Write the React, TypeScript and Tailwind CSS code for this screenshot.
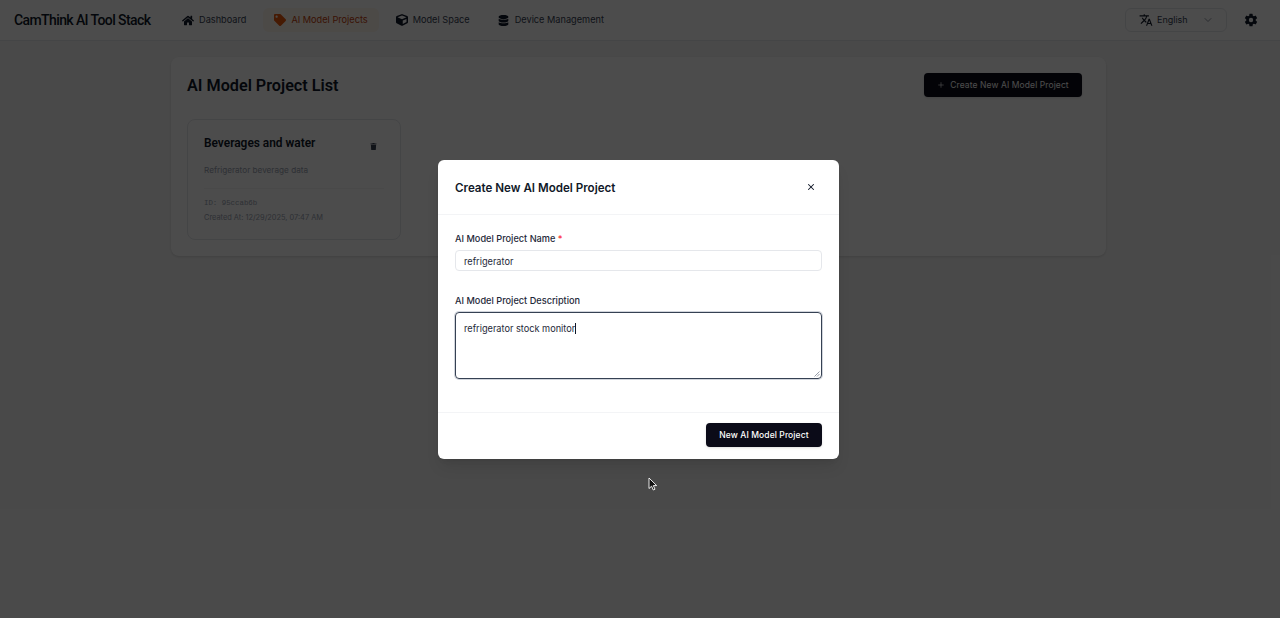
import { ChevronDown, Plus, X } from "lucide-react";
import { FaCube, FaDatabase, FaHome, FaTag, FaTrash } from "react-icons/fa";
import { IoSettingsSharp } from "react-icons/io5";
import { MdTranslate } from "react-icons/md";

const navItems = [
  { label: "Dashboard", icon: FaHome, active: false, iconSize: 13 },
  { label: "AI Model Projects", icon: FaTag, active: true, iconSize: 12 },
  { label: "Model Space", icon: FaCube, active: false, iconSize: 12 },
  { label: "Device Management", icon: FaDatabase, active: false, iconSize: 11 },
];

function Header() {
  return (
    <header className="flex h-[41px] items-center border-b border-gray-200 bg-white pl-[14px] pr-[22px]">
      <span className="w-[157px] whitespace-nowrap font-['Roboto',sans-serif] text-[14px] font-medium tracking-[-0.6px] text-gray-900">
        CamThink AI Tool Stack
      </span>
      <nav className="flex items-center gap-[6px]">
        {navItems.map((item) => {
          const Icon = item.icon;
          return (
            <div
              key={item.label}
              className={`flex h-[24px] items-center gap-[5px] rounded-md px-[11px] whitespace-nowrap text-[9.2px] ${
                item.active ? "bg-orange-50 text-[#c2410c]" : "text-gray-700"
              }`}
            >
              <span className="flex w-[12px] justify-center">
                <Icon size={item.iconSize} className={item.active ? "text-[#ea580c]" : "text-gray-900"} />
              </span>
              <span>{item.label}</span>
            </div>
          );
        })}
      </nav>
      <div className="ml-auto flex items-center gap-[17px]">
        <div className="flex h-[24px] w-[102px] items-center rounded-md border border-gray-200 pl-[13px] text-[9px] text-gray-700">
          <MdTranslate size={14} className="text-gray-900" />
          <span className="ml-[4px]">English</span>
          <ChevronDown size={12} strokeWidth={1.5} className="ml-[14px] text-gray-500" />
        </div>
        <IoSettingsSharp size={14} className="text-gray-900" />
      </div>
    </header>
  );
}

function ProjectCard() {
  return (
    <div className="h-[121px] w-[214px] rounded-lg border border-gray-200 bg-white px-[16px] pt-[15px]">
      <div className="flex items-start justify-between">
        <h3 className="font-['Roboto',sans-serif] text-[11.9px] font-semibold leading-[16px] text-gray-900">
          Beverages and water
        </h3>
        <FaTrash size={7} className="mr-[7px] mt-[8px] text-gray-700" />
      </div>
      <p className="mt-[13px] text-[8.2px] leading-[12px] text-gray-400">Refrigerator beverage data</p>
      <div className="mt-[12px] border-t border-gray-100 pt-[8px]">
        <p className="font-['Liberation_Mono',monospace] text-[7.4px] leading-[12px] text-gray-400">ID: 95ccab6b</p>
        <p className="mt-[3px] text-[7.4px] leading-[12px] text-gray-400">Created At: 12/29/2025, 07:47 AM</p>
      </div>
    </div>
  );
}

function ProjectList() {
  return (
    <main className="px-[171px] pt-[16px] pr-[174px]">
      <section className="h-[199px] rounded-lg bg-white px-[16px] pt-[16px] shadow-sm">
        <div className="flex h-[24px] items-center justify-between pr-[8px]">
          <h1 className="pt-[3px] font-['Roboto',sans-serif] text-[16.2px] font-semibold text-gray-900">
            AI Model Project List
          </h1>
          <button className="flex h-[24px] w-[158px] items-center justify-center gap-[5px] rounded bg-[#0b0b18] text-[8.5px] tracking-[0.1px] text-white shadow">
            <Plus size={8} />
            Create New AI Model Project
          </button>
        </div>
        <div className="mt-[22px]">
          <ProjectCard />
        </div>
      </section>
    </main>
  );
}

function CreateDialog() {
  return (
    <div className="absolute inset-0 flex items-center justify-center bg-black/70 pr-[3px]">
      <div className="w-[401px] rounded-md bg-white shadow-lg">
        <div className="flex h-[55px] items-center justify-between border-b border-gray-100 pl-[17px] pr-[23px]">
          <h2 className="pt-[4px] text-[11.6px] font-semibold text-gray-900">Create New AI Model Project</h2>
          <X size={10} strokeWidth={2.5} className="text-gray-900" />
        </div>
        <div className="h-[197px] px-[17px] pt-[17px]">
          <label className="block text-[9.2px] font-medium leading-[14px] text-gray-800">
            AI Model Project Name <span className="text-red-500">*</span>
          </label>
          <input
            readOnly
            value="refrigerator"
            className="mt-[4px] block h-[21px] w-[367px] rounded border border-gray-200 px-[8px] pt-[2px] text-[9.2px] text-gray-800 outline-none"
          />
          <label className="mt-[23px] block text-[9.2px] font-medium leading-[14px] text-gray-800">
            AI Model Project Description
          </label>
          <div className="relative mt-[4px] h-[67px] w-[367px] rounded border border-gray-700 px-[8px] pt-[9px] text-[9.2px] leading-[14px] text-gray-800 ring-1 ring-gray-300">
            refrigerator stock monitor
            <span className="inline-block h-[11px] w-px bg-gray-900 align-[-2px]" />
            <svg className="absolute bottom-[1px] right-[1px] text-gray-500" width="6" height="6" viewBox="0 0 6 6">
              <path d="M0.5 5.5 5.5 0.5M3 5.5 5.5 3" stroke="currentColor" strokeWidth="0.7" fill="none" />
            </svg>
          </div>
        </div>
        <div className="flex h-[47px] items-start justify-end border-t border-gray-100 pr-[17px] pt-[10px]">
          <button className="h-[24px] w-[116px] rounded bg-[#0b0b18] pt-[1px] text-[8.5px] font-medium tracking-[0.1px] text-white shadow">
            New AI Model Project
          </button>
        </div>
      </div>
      <svg className="absolute left-[648px] top-[477px]" width="10" height="14" viewBox="0 0 10 14">
        <path d="M1 1v10.5l2.6-2.3 1.7 3.8 1.7-.8-1.7-3.6h3.4z" fill="#111" stroke="#fff" strokeWidth="0.9" />
      </svg>
    </div>
  );
}

export default function App() {
  return (
    <div className="relative h-[618px] overflow-hidden bg-[#f5f5f5] font-['Inter',sans-serif]">
      <Header />
      <ProjectList />
      <CreateDialog />
    </div>
  );
}
